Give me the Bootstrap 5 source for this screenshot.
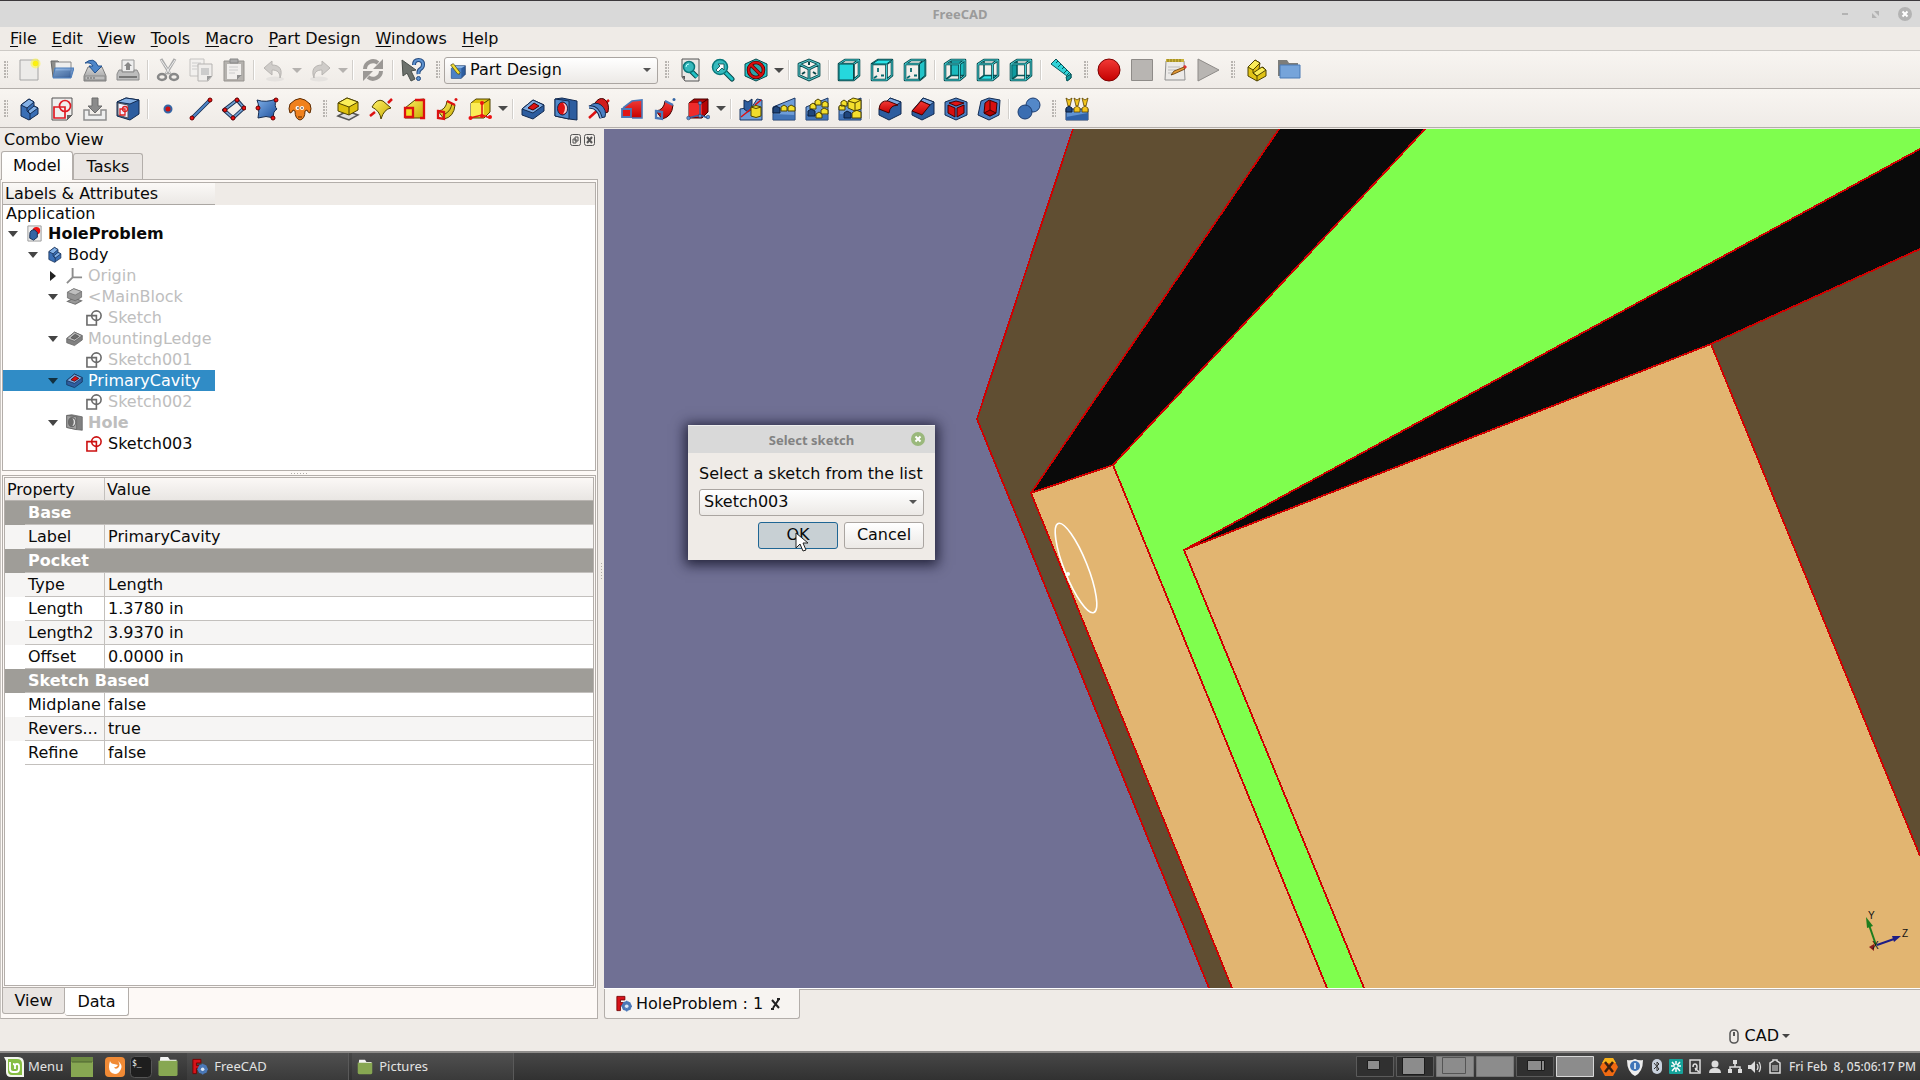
<!DOCTYPE html>
<html lang="en">
<head>
<meta charset="utf-8">
<meta name="viewport" content="width=device-width, initial-scale=1">
<title>FreeCAD</title>
<link href="https://cdn.jsdelivr.net/npm/bootstrap@5.3.0/dist/css/bootstrap.min.css" rel="stylesheet">
<style>
:root{--face:#efebe7;--line:#b3aeaa;--pane:#fdf9f6}
body{font-family:"DejaVu Sans",sans-serif;font-size:16px;line-height:20px;color:#0a0a0a;background:var(--face);overflow:hidden}
button{font:inherit;color:inherit}
svg{display:block;flex:none}
.titlebar{height:27px;background:#d9d9d9;border-top:1px solid #3b383c;font:bold 13px/26px "Noto Sans",sans-serif;color:#9b9b9b}
.titlebar .spacer,.wbtns{width:82px}
.wbtns button,.dlg-title button,.dockbtns button,.tabx{border:0;background:none;padding:0}
.menubar{height:24px;padding-left:3px;gap:1px;border-bottom:1px solid #cdcac6}
.menubar a{color:inherit;text-decoration:none;padding:0 7px;line-height:24px}
.menubar u{text-underline-offset:2px;text-decoration-thickness:1px}
.tools{background:linear-gradient(#f8f5f1,#efebe7);border-bottom:1px solid var(--line);padding-top:1px;height:38px}
.tools.second{height:39px;margin-bottom:1px}
.tb{width:33px;height:36px;border:0;padding:0;background:none;display:flex;align-items:center;justify-content:center}
.tb svg{width:24px;height:24px}
.dd{width:13px;height:36px;border:0;padding:0;background:none;display:flex;align-items:center;justify-content:center}
.dd::before{content:"";border:5px solid transparent;border-top:5px solid #4a4a4a;border-bottom:0}
.dd:disabled::before{border-top-color:#b5b2af}
.sepr{width:7px;display:flex;justify-content:flex-end;padding-right:2px}
.sepr::before{content:"";width:2px;height:20px;background:linear-gradient(90deg,#d2cfcb 1px,#fff 1px)}
.grip{width:15px;display:flex;justify-content:flex-end;padding-right:4px}
.grip.first{width:12px}
.grip::before{content:"";width:4px;height:18px;background:radial-gradient(circle at 1px 1px,#b9b5b1 0 1px,transparent 1px) 0 0/3px 3px}
.combo{border:1px solid #aaa5a1;border-radius:3px;color:#0a0a0a;font-size:16px;line-height:20px;height:27px;padding:0 24px 1px 4px;background:url("data:image/svg+xml,%3Csvg xmlns='http://www.w3.org/2000/svg' width='8' height='5'%3E%3Cpath d='M0 0h8L4 4z' fill='%23555'/%3E%3C/svg%3E") no-repeat right 6px center,linear-gradient(#fff,#ece9e6);background-size:8px 5px,auto;appearance:none}
.wb{width:214px}
.wb .combo{width:100%;padding-left:25px}
.wb svg{position:absolute;left:6px;top:6px;width:16px;height:16px}
.dock{width:598px}
.dock-title{height:22px;padding:0 3px 0 4px}
.dockbtns{gap:3px}
.tabs-top{height:28px;padding-left:1px}
.tabs-top button,.tabs-bot button{border:1px solid var(--line);background:#e9e5e2;padding:0}
.tabs-top button{border-bottom:0;border-radius:3px 3px 0 0;height:26px;width:70px}
.tabs-top button.on{background:linear-gradient(#fff,#fdfbf9);height:29px;width:72px;z-index:1;align-self:flex-start}
.pane{border:1px solid var(--line);border-left-color:#c9c5c1;background:var(--pane);padding:2px 1px 0 1px;min-height:0}
.tree{border:1px solid var(--line);background:#fff;height:289px}
.tree-head{background:var(--face);height:22px;line-height:22px}
.tree-head span{width:212px;height:22px;padding-left:2px;background:linear-gradient(#fbf9f7,#ebe8e5);border-bottom:1px solid #aba7a3}
.tree ul{list-style:none;margin:0;padding:0}
.tree li{height:21px;width:212px;display:flex;align-items:center}
.tree li.app{height:18px;padding-left:3px}
.tree li i{width:14px;display:flex;justify-content:center;margin-right:6px;flex:none}
.tree li i.o::before{content:"";border:5px solid transparent;border-top:6px solid #444;border-bottom:0}
.tree li i.c::before{content:"";border:5px solid transparent;border-left:6px solid #222;border-right:0}
.tree li svg{width:17px;height:17px;margin-right:5px}
.l1{padding-left:3px}.l2{padding-left:23px}.l3{padding-left:43px}.l4{padding-left:63px}
.off{color:#bebebe}
.off svg{filter:grayscale(1) opacity(.75)}
.tree li.sel{background:#308cc6;color:#fff}
.tree li.sel i.o::before{border-top-color:#12303f}
.split-h{height:4px;display:flex;justify-content:center;align-items:center}
.split-h::before{content:"";width:17px;height:1px;background:repeating-linear-gradient(90deg,#b0aca8 0 1px,transparent 1px 3px)}
.split-v{width:6px;display:flex;align-items:center;justify-content:center;padding-bottom:6px}
.split-v::before{content:"";width:1px;height:17px;background:repeating-linear-gradient(#b0aca8 0 1px,transparent 1px 3px)}
.props-out{border:1px solid var(--line);padding:1px;min-height:0}
.props-in{border:1px solid var(--line);background:#fff;height:100%}
.props{width:100%;table-layout:fixed;border-collapse:separate;border-spacing:0}
.props th,.props td{padding:0 0 0 3px;height:24px;line-height:21px;border-bottom:1px solid #c3c0bd;font-weight:400;white-space:nowrap;overflow:hidden;text-overflow:ellipsis}
.props thead th{height:23px;line-height:21px;padding-left:2px;background:linear-gradient(#fbf8f6,#e9e6e3);border-bottom:1px solid #b8b4b0}
.props tbody .ind{border-bottom:0;padding:0}
.props .k{border-right:1px solid #c3c0bd}
.props tr.alt>*{background:#f6f5f4}
.props tr.grp>*{background:#9f9d98;color:#fff;font-weight:700}
.tabs-bot{height:30px}
.tabs-bot button{border-top:0;width:63px;height:26px;border-radius:0 0 3px 3px}
.tabs-bot button.on{background:#fff;width:64px;height:28px;border-left:0}
.view3d{background:#707094;border-bottom:1px solid #fff;min-height:0}
.view3d>svg{width:100%;height:100%}
.dlg{left:84px;top:296px;width:247px;background:var(--face);box-shadow:0 2px 12px 3px rgba(10,10,30,.75)}
.dlg-title{height:28px;background:#d9d9d9;font:bold 13px/28px "Noto Sans",sans-serif;color:#828282;border-top:1px solid #eee}
.dlg-title button{position:absolute;right:10px;top:7px}
.dlg-body{padding:10px 11px 11px 11px}
.dlg-body label{line-height:22px;margin-bottom:4px;white-space:nowrap}
.qb{width:80px;height:27px;border:1px solid #aaa5a1;border-radius:3px;background:linear-gradient(#fff,#ece9e6);padding:0 0 1px}
.qb.ok{border-color:#1f6694;background:#c8d0d4}
.cursor{left:107px;top:107px}
.mdi{border-top:1px solid var(--line);height:30px}
.mdi-tab{width:196px;height:30px;margin-top:-1px;border:1px solid var(--line);border-top:0;border-radius:0 0 3px 3px;background:#f7f4f1;padding:0 15px 0 11px;gap:4px}
.status{height:32px;padding:2px 130px 0 0}
.status button{border:0;background:none;padding:0;gap:3px}
.status button svg{margin-right:3px}
.status button::after{content:"";border:4px solid transparent;border-top-color:#444;border-bottom:0}
.taskbar{height:29px;background:linear-gradient(#474747,#313131);border-top:2px solid #8e8c8a;font:13px/25px "Noto Sans",sans-serif;color:#e2e2e2}
.taskbar button{border:0;background:none;padding:0;height:27px}
.taskbar .task{width:162px;background:linear-gradient(#505050,#3a3a3a);border-right:1px solid #5a5a5a;padding-left:5px;gap:6px;margin-right:3px}
.tray svg{height:18px}
.clock{color:#dedede;font-size:12px;font-weight:500;white-space:pre}
</style>
</head>
<body class="d-flex flex-column vh-100">
<svg width="0" height="0" class="position-absolute" aria-hidden="true">
<defs>
<linearGradient id="gb" x1="0" y1="0" x2="1" y2="1"><stop offset="0" stop-color="#7fb0e8"/><stop offset="1" stop-color="#1d4f9c"/></linearGradient>
<linearGradient id="gg" x1="0" y1="0" x2="0" y2="1"><stop offset="0" stop-color="#d5d5d5"/><stop offset="1" stop-color="#9a9a9a"/></linearGradient>
<linearGradient id="gr" x1="0" y1="0" x2="0" y2="1"><stop offset="0" stop-color="#f23a36"/><stop offset="1" stop-color="#c40000"/></linearGradient>
<linearGradient id="gy" x1="0" y1="0" x2="1" y2="1"><stop offset="0" stop-color="#fff26a"/><stop offset="1" stop-color="#c9ab00"/></linearGradient>
<g id="wire"><path d="M2 6h14.500v16H2zM2 6l6-4h14v15.500L16.500 22M16.500 6L22 2" fill="none" stroke="#08474a" stroke-width="2.600" stroke-linejoin="round"/><path d="M2 6h14.500v16H2zM2 6l6-4h14v15.500L16.500 22M16.500 6L22 2" fill="none" stroke="#45cfd3" stroke-width="1"/></g>
<path id="tick" d="M8 10v4M11 17.500h3M4 20l3-2" stroke="#08696d" stroke-width="1.800" fill="none"/>
<path id="backw" d="M8 2v15.500h14M8 17.500L2 22" stroke="#08575a" stroke-width="1.600" fill="none"/>
<g id="base"><path d="M1 10L23 1v22H1z" fill="#6d9cd8" stroke="#1b3764"/><path d="M1 23L1 17l22 1v5z" fill="#2f62a8" opacity=".7"/></g>
</defs>
<symbol id="new" viewBox="0 0 24 24"><path d="M3 2h18v20H3z" fill="#ecebe9" stroke="#a5a5a5"/><circle cx="18.500" cy="5.500" r="5" fill="#fdf64a" opacity=".6"/><circle cx="18.500" cy="5.500" r="2.800" fill="#fbf010"/></symbol>
<symbol id="open" viewBox="0 0 24 24"><path d="M1 3h7l2 2h10v14H3z" fill="#8d8d8a" stroke="#666"/><path d="M5 4h16v9H5z" fill="#eee" stroke="#888"/><path d="M5 10h19l-3 10H3z" fill="url(#gb)" opacity=".75"/><path d="M5 10h19l-3 10H3z" fill="none" stroke="#4a7cba"/></symbol>
<symbol id="save" viewBox="0 0 24 24"><path d="M5 9h14l4 9v5H1v-5z" fill="url(#gg)" stroke="#7e7e7e"/><path d="M2 18h20v4H2z" fill="#bcbcbc" stroke="#8b8b8b"/><path d="M4 20h2m1 0h2m1 0h2" stroke="#666"/><path d="M2 5q9-7 13 3h4l-7 7-6-7h4Q8 4 2 5z" fill="#4d86c9" stroke="#24528e"/></symbol>
<symbol id="print" viewBox="0 0 24 24"><path d="M6 2h12v12H6z" fill="#eee" stroke="#999"/><path d="M12 4l4 4h-2v4h-4V8H8z" fill="#888"/><path d="M3 12h3v2h12v-2h3l2 4v6H1v-6z" fill="#bdbdbd" stroke="#8a8a8a"/><path d="M3 19h18" stroke="#777" stroke-width="2"/></symbol>
<symbol id="cut" viewBox="0 0 24 24"><path d="M5 1l9 15M19 1l-9 15" stroke="#aaa" stroke-width="3"/><path d="M5 2l9 13M19 2l-9 13" stroke="#eee"/><ellipse cx="6" cy="19" rx="4" ry="3" fill="none" stroke="#888" stroke-width="2.500"/><ellipse cx="18" cy="19" rx="4" ry="3" fill="none" stroke="#888" stroke-width="2.500"/></symbol>
<symbol id="copy" viewBox="0 0 24 24"><path d="M1 1h14v17H1z" fill="#f2f0ee" stroke="#c4c2c0"/><path d="M3 5h9M3 8h9M3 11h5" stroke="#ccc"/><path d="M9 6h14v12l-4 5H9z" fill="#efedeb" stroke="#b5b3b1"/><path d="M12 10h8v7h-8z" fill="#ccc"/><path d="M23 18h-5v5z" fill="#999"/></symbol>
<symbol id="paste" viewBox="0 0 24 24"><path d="M2 3h20v20H2z" fill="#b5b2ae" stroke="#96938f"/><path d="M5 6h14v12l-3 3H5z" fill="#f1efed"/><path d="M8 1h8v4H8z" fill="#aaa" stroke="#888"/><path d="M7 9h9M7 12h9M7 15h6" stroke="#ccc"/><path d="M20 17h-5v5z" fill="#8d8d8d"/></symbol>
<symbol id="undo" viewBox="0 0 24 24"><ellipse cx="13" cy="21" rx="9" ry="2.500" fill="#e5e2df"/><path d="M10 3v4c8 0 11 5 8 13 0-6-3-8-8-8v5L2 10z" fill="#cfccc9" stroke="#b8b5b2"/></symbol>
<symbol id="redo" viewBox="0 0 24 24"><ellipse cx="11" cy="21" rx="9" ry="2.500" fill="#e5e2df"/><path d="M14 3v4C6 7 3 12 6 20c0-6 3-8 8-8v5l8-7z" fill="#cfccc9" stroke="#b8b5b2"/></symbol>
<symbol id="reload" viewBox="0 0 24 24"><path d="M4 11a8 8 0 0 1 13-6M20 13a8 8 0 0 1-13 6" fill="none" stroke="#9b9895" stroke-width="4"/><path d="M22 1v10H12zM2 23V13h10z" fill="#9b9895"/></symbol>
<symbol id="what" viewBox="0 0 24 24"><path d="M1 2l1 16 4-3 4 8 4-2-4-8 5-1z" fill="#6c716c" stroke="#4a4f4a"/><path d="M13 7q0-5 4.500-5T22 6.500q0 3-2.500 4.500T17.500 16" fill="none" stroke="#244b80" stroke-width="4"/><path d="M13 7q0-5 4.500-5T22 6.500q0 3-2.500 4.500T17.500 16" fill="none" stroke="#5f93cf" stroke-width="2"/><circle cx="17.500" cy="20.500" r="2" fill="#5f93cf" stroke="#244b80"/></symbol>
<symbol id="pd" viewBox="0 0 24 24"><path d="M2 8l6-4h15v13l-6 6H2z" fill="#2d5d9f" stroke="#152f57"/><path d="M2 8h15v15H2z" fill="#4a80c5"/><path d="M2 8l6-4h15l-6 4z" fill="#86b1e4"/><path d="M1 3l4-2 10 13-1 3-3-1z" fill="#f1dc33" stroke="#453d00"/></symbol>
<symbol id="fit" viewBox="0 0 24 24"><path d="M4 1h17v22H7l-3-4z" fill="#e9e7e5" stroke="#555"/><path d="M13 13l6 6" stroke="#08474a" stroke-width="5"/><path d="M13 13l6 6" stroke="#21c0c4" stroke-width="3"/><circle cx="11" cy="9" r="5.500" fill="#35b9bd" stroke="#08777a" stroke-width="1.500"/><path d="M8 9q0-3 3-3" stroke="#bff" fill="none"/><path d="M4 18h3v4z" fill="#555"/></symbol>
<symbol id="fits" viewBox="0 0 24 24"><path d="M14 14l7 7" stroke="#08474a" stroke-width="5" stroke-linecap="round"/><path d="M14 14l7 7" stroke="#21c0c4" stroke-width="3" stroke-linecap="round"/><circle cx="9" cy="9" r="7.500" fill="#35b9bd" stroke="#08777a" stroke-width="1.500"/><path d="M5 12l4-4-2-2h6v6l-2-2-4 4z" fill="#fff" stroke="#08474a" stroke-width=".8"/></symbol>
<symbol id="style" viewBox="0 0 24 24"><path d="M12 1l11 5v12l-11 5L1 18V6z" fill="#23c5ca" stroke="#08474a"/><circle cx="12" cy="12" r="7.500" fill="#2aa5a9" stroke="#500" stroke-width="3.600"/><path d="M7 7l10 10" stroke="#500" stroke-width="3.600"/><circle cx="12" cy="12" r="7.500" fill="none" stroke="#d80f0f" stroke-width="2"/><path d="M6.500 6.500l11 11" stroke="#d80f0f" stroke-width="2"/></symbol>
<symbol id="iso" viewBox="0 0 24 24"><path d="M12 2l10 4v11.500L12 22 2 17.500V6zM2 6l10 5 10-5M12 11v11" fill="none" stroke="#08474a" stroke-width="2.800" stroke-linejoin="round"/><path d="M12 2l10 4v11.500L12 22 2 17.500V6zM2 6l10 5 10-5M12 11v11" fill="none" stroke="#56c7ca" stroke-width="1.100"/><path d="M5 16l3-2M19 16l-3-2M12 4v3" stroke="#08474a" stroke-width="2"/></symbol>
<symbol id="vf" viewBox="0 0 24 24"><use href="#wire"/><path d="M2 6h14.500v16H2z" fill="#25d8dd" stroke="#08474a"/></symbol>
<symbol id="vt" viewBox="0 0 24 24"><use href="#tick"/><use href="#wire"/><path d="M2 6l6-4h14l-5.500 4z" fill="#2be3e8" stroke="#08474a"/></symbol>
<symbol id="vr" viewBox="0 0 24 24"><use href="#tick"/><use href="#wire"/><path d="M16.500 6L22 2v15.500L16.500 22z" fill="#22c3c8" stroke="#08474a"/></symbol>
<symbol id="vre" viewBox="0 0 24 24"><path d="M8 2h14v15.500H8z" fill="#1bb9be"/><use href="#backw"/><use href="#wire"/></symbol>
<symbol id="vb" viewBox="0 0 24 24"><path d="M2 22l6-4.500h14L16.500 22z" fill="#2be3e8"/><use href="#backw"/><use href="#wire"/></symbol>
<symbol id="vl" viewBox="0 0 24 24"><path d="M2 6l6-4v15.500L2 22z" fill="#0d9a9f"/><use href="#backw"/><use href="#wire"/></symbol>
<symbol id="rule" viewBox="0 0 24 24"><path d="M2 6l5-5 15 15v4l-4 3v-5z" fill="#30d3d8" stroke="#08585c"/><path d="M17 19l5-3v4l-4 3z" fill="#159a9e" stroke="#08585c"/><path d="M9 3L7 5m5 1L9 9m6 0l-2 2m5 1l-3 3m5 0l-2 2" stroke="#08585c"/></symbol>
<symbol id="rec" viewBox="0 0 24 24"><circle cx="12" cy="12" r="11" fill="url(#gr)" stroke="#7d0000"/></symbol>
<symbol id="stop" viewBox="0 0 24 24"><path d="M1.500 1.500h21v21h-21z" fill="#b8b5b2" stroke="#8e8b88"/></symbol>
<symbol id="edit" viewBox="0 0 24 24"><path d="M3 3h18l1 19H2z" fill="#eceae8" stroke="#8f8f8f"/><path d="M3 1h18v3H3z" fill="#c9b23a"/><path d="M5 1v3m3-3v3m3-3v3m3-3v3m3-3v3" stroke="#8a7616"/><path d="M5 9h12M5 12h8M5 15h6" stroke="#bbb"/><path d="M8 17l3-4 10-4 1 2-11 5z" fill="#e49a35" stroke="#5e3500" stroke-width=".8"/><path d="M20 8l2-1 2 2-2 2z" fill="#d33"/></symbol>
<symbol id="play" viewBox="0 0 24 24"><path d="M2 1l21 11L2 23z" fill="#b8b5b2" stroke="#8e8b88"/></symbol>
<symbol id="part" viewBox="0 0 24 24"><path d="M4 9l7-7 5 3-1 6 4-2 3 3v6l-9 5-9-5z" fill="#e0c216" stroke="#4f4300"/><path d="M4 9l7-7 5 3-7 7zM9 15l9-6 4 3-9 6z" fill="#f9ec58" stroke="#4f4300"/><path d="M9 12v3l4 3v5" fill="none" stroke="#4f4300"/></symbol>
<symbol id="fold" viewBox="0 0 24 24"><path d="M1 2h9l2 3h9v13H1z" fill="#7d7d7a"/><path d="M3 7h20v13H3z" fill="#76a4da" stroke="#4b7bb5"/></symbol>
<symbol id="body" viewBox="0 0 24 24"><path d="M4 8l8-6 5 3v4l4 2v6l-9 6-8-4z" fill="#3a6fb5" stroke="#122a50"/><path d="M4 8l8-6 5 3-7 6zM11 14l6-5 4 2-8 6z" fill="#84b1e6" stroke="#122a50"/><path d="M10 11v3l3 3v6" fill="none" stroke="#122a50"/></symbol>
<symbol id="sketch" viewBox="0 0 24 24"><path d="M2 1h20v17l-5 5H2z" fill="#f0efee" stroke="#555"/><path d="M22 18h-5v5z" fill="#666"/><path d="M4 10h11v11H4z" fill="none" stroke="#e01b24" stroke-width="1.700"/><circle cx="15" cy="9" r="5.500" fill="none" stroke="#e01b24" stroke-width="1.700"/></symbol>
<symbol id="map" viewBox="0 0 24 24"><path d="M1 13h5v5h12v-5h5v10H1z" fill="#eee" stroke="#8f8f8f" stroke-width="1.500"/><path d="M9 1h6v8h4l-7 7-7-7h4z" fill="#8b8b8b" stroke="#6c6c6c"/></symbol>
<symbol id="mapf" viewBox="0 0 24 24"><path d="M1 5l9-4 13 2v14l-9 6-13-4z" fill="#2d5d9f" stroke="#122a50"/><path d="M1 5l9-4 13 2-9 4z" fill="#86b1e4" stroke="#122a50"/><path d="M2 6l10 2v13L2 18z" fill="#eef" stroke="#555"/><path d="M4 12h5v6H4z" fill="none" stroke="#d22" stroke-width="1.300"/><circle cx="9" cy="12" r="2.500" fill="none" stroke="#d22" stroke-width="1.300"/></symbol>
<symbol id="pt" viewBox="0 0 24 24"><circle cx="12" cy="12" r="3.500" fill="#c11" stroke="#3465a4" stroke-width="2"/></symbol>
<symbol id="ln" viewBox="0 0 24 24"><path d="M3 21L21 3" stroke="#122a50" stroke-width="3.600"/><path d="M3 21L21 3" stroke="#4f86c8" stroke-width="2"/><circle cx="3" cy="21" r="2" fill="#e11" stroke="#600"/><circle cx="21" cy="3" r="2" fill="#e11" stroke="#600"/></symbol>
<symbol id="dia" viewBox="0 0 24 24"><path d="M15 3l7 8-11 10-9-8z" fill="none" stroke="#122a50" stroke-width="3.600"/><path d="M15 3l7 8-11 10-9-8z" fill="none" stroke="#729fcf" stroke-width="1.800"/><g fill="#e11" stroke="#600"><circle cx="15" cy="3" r="2"/><circle cx="22" cy="11" r="2"/><circle cx="11" cy="21" r="2"/><circle cx="3" cy="13" r="2"/></g></symbol>
<symbol id="surf" viewBox="0 0 24 24"><path d="M2 3q9 3 19-1-2 8 1 10-5 3-3 9-8-3-16 0Q5 10 2 3z" fill="url(#gb)" stroke="#122a50"/><g fill="#e11" stroke="#600"><circle cx="21" cy="3" r="2"/><circle cx="3" cy="11" r="2"/><circle cx="18" cy="21" r="2"/></g></symbol>
<symbol id="goat" viewBox="0 0 24 24"><path d="M7 3q5-3 10 0l5 4q2 5 0 9-2 0-3-3l-2 1q0 8-5 9-5-1-5-9l-2-1q-1 3-3 3-2-4 0-9z" fill="#f0811d" stroke="#5d2a00"/><circle cx="9.500" cy="11" r="2" fill="#fff"/><circle cx="14" cy="11" r="2" fill="#fff"/><circle cx="10" cy="11" r=".8"/><circle cx="14" cy="11" r=".8"/><path d="M10 20h4" stroke="#5d2a00"/></symbol>
<symbol id="pad" viewBox="0 0 24 24"><path d="M2 19l9-5 11 4-9 5z" fill="#ddd" stroke="#555" stroke-width="1.500"/><path d="M2 6l9-5 11 4v8l-9 5-11-4z" fill="#dfc20f" stroke="#4f4300"/><path d="M2 6l9-5 11 4-9 5z" fill="#fbee59" stroke="#4f4300"/><path d="M13 10v8" stroke="#4f4300"/></symbol>
<symbol id="padg" viewBox="0 0 24 24"><path d="M2 19l9-5 11 4-9 5z" fill="#777" stroke="#444" stroke-width="1.500"/><path d="M2 6l9-5 11 4v8l-9 5-11-4z" fill="#707070" stroke="#333"/><path d="M2 6l9-5 11 4-9 5z" fill="#aaa" stroke="#444"/></symbol>
<symbol id="rev" viewBox="0 0 24 24"><path d="M1 19l5-4M19 6l4-4" stroke="#d11" stroke-width="2.500"/><path d="M3 10Q8 1 14 4l8 7q-7 1-10 11-1-8-9-12z" fill="url(#gy)" stroke="#4f4300"/></symbol>
<symbol id="loft" viewBox="0 0 24 24"><path d="M3 11L13 3l9-1v19H3z" fill="url(#gy)" stroke="#4f4300"/><path d="M13 3h9v18h-4" fill="none" stroke="#d11" stroke-width="2.300"/><path d="M3 11h8v9H3z" fill="#f3dc22" stroke="#d11" stroke-width="2.300"/></symbol>
<symbol id="sweep" viewBox="0 0 24 24"><path d="M3 14q8-1 9-10l8 4q-1 12-11 14z" fill="url(#gy)" stroke="#4f4300"/><path d="M10 17q6-3 7-11" fill="none" stroke="#4f4300"/><path d="M3 14l6 1v7l-6-1zM12 4l8 4" fill="none" stroke="#d11" stroke-width="2.300"/><circle cx="21" cy="2.500" r="1.500" fill="#d11"/></symbol>
<symbol id="prim" viewBox="0 0 24 24"><path d="M3 6l5-4h14v13l-6 6H3z" fill="#e0c512" stroke="#4f4300"/><path d="M3 6h13v14H3z" fill="#fbec55"/><path d="M16 6l6-4" stroke="#4f4300"/><path d="M14 6v13M2 21l12-3 8 3" fill="none" stroke="#d11" stroke-width="1.500"/><g fill="#e11"><circle cx="14" cy="6" r="2"/><circle cx="2.500" cy="21" r="2"/><circle cx="14" cy="19" r="2"/><circle cx="22" cy="20" r="2"/></g></symbol>
<symbol id="pocket" viewBox="0 0 24 24"><path d="M1 12L12 3l11 5v6L12 22 1 18z" fill="#2d5d9f" stroke="#122a50"/><path d="M1 12L12 3l11 5-11 8z" fill="#7eaae0" stroke="#122a50"/><path d="M7 11l6-5 5 3-6 4z" fill="#d11" stroke="#400"/></symbol>
<symbol id="hole" viewBox="0 0 24 24"><path d="M1 2l7-1 15 3v19l-8-1-14-3z" fill="#2d5d9f" stroke="#122a50"/><path d="M1 2l14 2v18L1 19z" fill="#5289ca" stroke="#122a50"/><ellipse cx="8.500" cy="11.500" rx="5" ry="6.500" fill="#d11" stroke="#122a50"/><path d="M9 6q4 5 0 11 4-1 4-5.500T9 6z" fill="#fff" opacity=".8"/></symbol>
<symbol id="groove" viewBox="0 0 24 24"><path d="M2 21L22 3" stroke="#d11" stroke-width="2.500"/><path d="M8 6q4-6 9-4 6 4 4 13l-5 2q-2-9-8-11z" fill="#d11c1c" stroke="#400"/><path d="M3 9q5-5 11-1 6 5 4 12l-5 1q-1-9-10-12z" fill="#4a80c4" stroke="#122a50"/><path d="M2 10q9-1 12 11" fill="none" stroke="#122a50" stroke-width="3.500"/><path d="M2 10q9-1 12 11" fill="none" stroke="#78a6df" stroke-width="1.500"/></symbol>
<symbol id="sloft" viewBox="0 0 24 24"><path d="M3 11L12 4l10-1v18H3z" fill="url(#gr)"/><path d="M3 11L12 4l10-1v18l-10 0" fill="none" stroke="#4a78b8" stroke-width="1.600"/><path d="M2 12h9v8H2z" fill="#e01515" stroke="#4a78b8" stroke-width="1.800"/></symbol>
<symbol id="ssweep" viewBox="0 0 24 24"><path d="M3 14q8-1 9-10l8 4q-1 12-11 14z" fill="url(#gr)" stroke="#400"/><path d="M3 14l6 1v7l-6-1zM12 4l8 4" fill="none" stroke="#4a78b8" stroke-width="2.300"/><circle cx="21" cy="2.500" r="1.500" fill="#3465a4"/></symbol>
<symbol id="sprim" viewBox="0 0 24 24"><path d="M3 6l5-4h14v13l-6 6H3z" fill="#b50505" stroke="#400"/><path d="M3 6h13v14H3z" fill="#ef2b2b"/><path d="M16 6l6-4" stroke="#400"/><path d="M14 6v13M2 21l12-3 8 3" fill="none" stroke="#3465a4" stroke-width="1.500"/><g fill="#5f93d3" stroke="#122a50" stroke-width=".5"><circle cx="14" cy="6" r="1.800"/><circle cx="2.500" cy="21" r="1.800"/><circle cx="14" cy="19" r="1.800"/><circle cx="22" cy="20" r="1.800"/></g></symbol>
<symbol id="mir" viewBox="0 0 24 24"><path d="M1 12l12-2 5-8 5 1v20H1z" fill="#6d9cd8" stroke="#1b3764"/><path d="M5 3l4 2 4-3v10l-4 3-4-3z" fill="#2d5d9f" stroke="#122a50"/><path d="M2 20l10-8M16 8l6-5" stroke="#d11" stroke-width="1.500"/><path d="M12 10q5-3 10 0v9q-5 3-10 0z" fill="#f0dc2c" stroke="#4f4300"/><path d="M12 10q5 3 10 0" fill="none" stroke="#4f4300"/></symbol>
<symbol id="lin" viewBox="0 0 24 24"><use href="#base"/><path d="M1 11l3-2 4 2v5H1z" fill="#1f467d" stroke="#0b1d3a"/><g fill="#f3df2d" stroke="#4f4300"><path d="M9 10l3-2 3 2v4H9zM16 10l3-2 4 2v4h-7z"/></g></symbol>
<symbol id="pol" viewBox="0 0 24 24"><use href="#base"/><g fill="#f3df2d" stroke="#4f4300"><path d="M5 8l3-2 3 2v4H5zM10 4l3-2 3 2v4h-6zM17 6l3-2 3 2v4h-6zM16 13l3-2 4 2v4h-7zM11 17l3-2 3 2v4h-6z"/></g><path d="M3 14l3-2 4 2v5H3z" fill="#1f467d" stroke="#0b1d3a"/></symbol>
<symbol id="mul" viewBox="0 0 24 24"><use href="#base"/><g fill="#f3df2d" stroke="#4f4300"><path d="M3 5l3-2 3 2v4H3zM10 4l5-3 8 2v9l-6 2-7-3zM1 9l3-1 3 1v4H1zM14 16l4-3 5 2v6h-9z"/></g><path d="M10 4l7 2 6-3M17 6v8" fill="none" stroke="#4f4300"/><path d="M6 16l3-2 4 2v5H6z" fill="#1f467d" stroke="#0b1d3a"/></symbol>
<symbol id="fil" viewBox="0 0 24 24"><path d="M1 12L12 1l11 4v12l-12 6-10-5z" fill="#2d5d9f" stroke="#122a50"/><path d="M12 1l11 4-6 4-9-4z" fill="#7eaae0" stroke="#122a50"/><path d="M1 12q1-9 9-8l10 4q-8 0-9 8z" fill="url(#gr)" stroke="#400"/></symbol>
<symbol id="cha" viewBox="0 0 24 24"><path d="M1 14L12 1l11 4v12l-12 6-10-5z" fill="#2d5d9f" stroke="#122a50"/><path d="M12 1l11 4-4 3-9-4z" fill="#7eaae0" stroke="#122a50"/><path d="M1 14L10 4l9 4-8 10z" fill="url(#gr)" stroke="#400"/></symbol>
<symbol id="dra" viewBox="0 0 24 24"><path d="M1 5l11-4 11 4v13l-11 5-11-5z" fill="#4a7fc3" stroke="#122a50"/><path d="M5 6l7-2 8 2-8 3z" fill="#e01515" stroke="#400"/><path d="M4 8l7 3v9l-7-4zM20 8l-7 3v9l7-4z" fill="#d80f0f" stroke="#400"/></symbol>
<symbol id="thi" viewBox="0 0 24 24"><path d="M4 4l8-3 11 2-1 15-10 5L1 18z" fill="#4a7fc3" stroke="#122a50"/><path d="M8 6l4-3 8 3-1 10-6 3-6-3z" fill="#d80f0f" stroke="#400"/><path d="M13 4v9l-6 3 6 3 6-3-6-3" fill="#b50000" stroke="#400"/></symbol>
<symbol id="boo" viewBox="0 0 24 24"><circle cx="16" cy="8" r="7" fill="#5388c9" stroke="#1b3c70"/><circle cx="8" cy="15" r="7" fill="#3b6eb2" stroke="#1b3c70"/></symbol>
<symbol id="gear" viewBox="0 0 24 24"><path d="M1 12h22v11H1z" fill="#5f93d3" stroke="#1b3764"/><path d="M1 23v-3l22-4v7z" fill="#2f62a8"/><g fill="#f3c51c" stroke="#5a4300" stroke-width=".8"><path d="M1 1l3 2 3-2-2 8H3zM9 1l3 2 3-2-2 8h-2zM17 1l3 2 3-2-2 8h-2z"/><path d="M9 11l3-2 3 2v4H9zM17 11l3-2 3 2v4h-6z"/></g><path d="M1 11l3-2 3 2v4H1z" fill="#1f467d" stroke="#0b1d3a"/></symbol>
<symbol id="doc" viewBox="0 0 18 18"><path d="M2 1h14v16H2z" fill="#eee" stroke="#999"/><circle cx="11" cy="6" r="4" fill="#e11"/><path d="M4 10q0-5 5-5l3 3v5l-4 3-4-2z" fill="#3465a4" stroke="#122a50"/></symbol>
<symbol id="org" viewBox="0 0 18 18"><path d="M7 1v10h10M7 11l-6 6" fill="none" stroke="#666" stroke-width="2"/></symbol>
<symbol id="sk" viewBox="0 0 18 18"><path d="M1 7h10v10H1z" fill="none" stroke="#c11" stroke-width="1.700"/><circle cx="11" cy="7" r="5" fill="none" stroke="#c11" stroke-width="1.700"/></symbol>
<symbol id="fc" viewBox="0 0 18 18"><path d="M1 1h9v4H5v3h4v3H5v6H1z" fill="#d8131a" stroke="#700"/><circle cx="12" cy="12" r="4" fill="none" stroke="#4a78b8" stroke-width="3"/><path d="M12 6v12M6 12h12M8 8l8 8M16 8l-8 8" stroke="#4a78b8" stroke-width="1.600"/><circle cx="12" cy="12" r="2" fill="#dbe6f5"/></symbol>
<symbol id="gfold" viewBox="0 0 22 22"><path d="M3 1h8l2 3h7v4H2z" fill="#f4f4f4"/><path d="M1 5h20v14q0 2-2 2H3q-2 0-2-2z" fill="#87a752"/></symbol>
</svg>

<header>
<div class="titlebar d-flex">
<span class="spacer"></span><span class="flex-grow-1 text-center">FreeCAD</span>
<div class="wbtns d-flex justify-content-end align-items-center gap-3 pe-2">
<button aria-label="Minimize"><svg width="14" height="14"><path d="M4 6h6v2H4z" fill="#b3b3b3"/></svg></button>
<button aria-label="Restore"><svg width="14" height="14"><path d="M6 4h5v5zM4 6l5 5H4z" fill="#b3b3b3"/></svg></button>
<button aria-label="Close"><svg width="14" height="14"><circle cx="7" cy="7" r="7" fill="#b3b3b3"/><path d="M4.500 4.500l5 5m0-5l-5 5" stroke="#fff" stroke-width="2"/></svg></button>
</div></div>
<nav class="menubar d-flex"><a href="#"><u>F</u>ile</a><a href="#"><u>E</u>dit</a><a href="#"><u>V</u>iew</a><a href="#"><u>T</u>ools</a><a href="#"><u>M</u>acro</a><a href="#"><u>P</u>art Design</a><a href="#"><u>W</u>indows</a><a href="#"><u>H</u>elp</a></nav>
<div class="tools d-flex align-items-center" role="toolbar" aria-label="File and view">
<span class="grip first"></span>
<button class="tb" aria-label="New"><svg><use href="#new"/></svg></button><button class="tb" aria-label="Open"><svg><use href="#open"/></svg></button><button class="tb" aria-label="Save"><svg><use href="#save"/></svg></button><button class="tb" aria-label="Print"><svg><use href="#print"/></svg></button><span class="sepr"></span>
<button class="tb" aria-label="Cut"><svg><use href="#cut"/></svg></button><button class="tb" aria-label="Copy"><svg><use href="#copy"/></svg></button><button class="tb" aria-label="Paste"><svg><use href="#paste"/></svg></button><span class="sepr"></span>
<button class="tb" disabled aria-label="Undo"><svg><use href="#undo"/></svg></button><button class="dd" disabled aria-label="Undo list"></button><button class="tb" disabled aria-label="Redo"><svg><use href="#redo"/></svg></button><button class="dd" disabled aria-label="Redo list"></button><span class="sepr"></span>
<button class="tb" aria-label="Refresh"><svg><use href="#reload"/></svg></button><span class="sepr"></span><button class="tb" aria-label="What's this"><svg><use href="#what"/></svg></button><span class="grip"></span>
<div class="wb position-relative"><select class="combo" aria-label="Workbench"><option>Part Design</option></select><svg><use href="#pd"/></svg></div><span class="grip"></span>
<button class="tb" aria-label="Fit all"><svg><use href="#fit"/></svg></button><button class="tb" aria-label="Fit selection"><svg><use href="#fits"/></svg></button><button class="tb" aria-label="Draw style"><svg><use href="#style"/></svg></button><button class="dd" aria-label="Draw style list"></button><span class="sepr"></span>
<button class="tb" aria-label="Isometric"><svg><use href="#iso"/></svg></button><span class="sepr"></span>
<button class="tb" aria-label="Front"><svg><use href="#vf"/></svg></button><button class="tb" aria-label="Top"><svg><use href="#vt"/></svg></button><button class="tb" aria-label="Right"><svg><use href="#vr"/></svg></button><span class="sepr"></span>
<button class="tb" aria-label="Rear"><svg><use href="#vre"/></svg></button><button class="tb" aria-label="Bottom"><svg><use href="#vb"/></svg></button><button class="tb" aria-label="Left"><svg><use href="#vl"/></svg></button><span class="sepr"></span>
<button class="tb" aria-label="Measure"><svg><use href="#rule"/></svg></button><span class="grip"></span>
<button class="tb" aria-label="Record macro"><svg><use href="#rec"/></svg></button><button class="tb" aria-label="Stop macro"><svg><use href="#stop"/></svg></button><button class="tb" aria-label="Edit macros"><svg><use href="#edit"/></svg></button><button class="tb" aria-label="Run macro"><svg><use href="#play"/></svg></button><span class="grip"></span>
<button class="tb" aria-label="Create part"><svg><use href="#part"/></svg></button><button class="tb" aria-label="Create group"><svg><use href="#fold"/></svg></button>
</div>
<div class="tools second d-flex align-items-center" role="toolbar" aria-label="Part design">
<span class="grip first"></span>
<button class="tb" aria-label="Body"><svg><use href="#body"/></svg></button><button class="tb" aria-label="Create sketch"><svg><use href="#sketch"/></svg></button><button class="tb" aria-label="Edit sketch"><svg><use href="#map"/></svg></button><button class="tb" aria-label="Map sketch"><svg><use href="#mapf"/></svg></button><span class="sepr"></span>
<button class="tb" aria-label="Datum point"><svg><use href="#pt"/></svg></button><button class="tb" aria-label="Datum line"><svg><use href="#ln"/></svg></button><button class="tb" aria-label="Datum plane"><svg><use href="#dia"/></svg></button><button class="tb" aria-label="Shape binder"><svg><use href="#surf"/></svg></button><button class="tb" aria-label="Clone"><svg><use href="#goat"/></svg></button><span class="grip"></span>
<button class="tb" aria-label="Pad"><svg><use href="#pad"/></svg></button><button class="tb" aria-label="Revolution"><svg><use href="#rev"/></svg></button><button class="tb" aria-label="Additive loft"><svg><use href="#loft"/></svg></button><button class="tb" aria-label="Additive pipe"><svg><use href="#sweep"/></svg></button><button class="tb" aria-label="Additive primitive"><svg><use href="#prim"/></svg></button><button class="dd" aria-label="Additive primitives"></button><span class="sepr"></span>
<button class="tb" aria-label="Pocket"><svg><use href="#pocket"/></svg></button><button class="tb" aria-label="Hole"><svg><use href="#hole"/></svg></button><button class="tb" aria-label="Groove"><svg><use href="#groove"/></svg></button><button class="tb" aria-label="Subtractive loft"><svg><use href="#sloft"/></svg></button><button class="tb" aria-label="Subtractive pipe"><svg><use href="#ssweep"/></svg></button><button class="tb" aria-label="Subtractive primitive"><svg><use href="#sprim"/></svg></button><button class="dd" aria-label="Subtractive primitives"></button><span class="sepr"></span>
<button class="tb" aria-label="Mirrored"><svg><use href="#mir"/></svg></button><button class="tb" aria-label="Linear pattern"><svg><use href="#lin"/></svg></button><button class="tb" aria-label="Polar pattern"><svg><use href="#pol"/></svg></button><button class="tb" aria-label="Multi transform"><svg><use href="#mul"/></svg></button><span class="sepr"></span>
<button class="tb" aria-label="Fillet"><svg><use href="#fil"/></svg></button><button class="tb" aria-label="Chamfer"><svg><use href="#cha"/></svg></button><button class="tb" aria-label="Draft"><svg><use href="#dra"/></svg></button><button class="tb" aria-label="Thickness"><svg><use href="#thi"/></svg></button><span class="sepr"></span>
<button class="tb" aria-label="Boolean"><svg><use href="#boo"/></svg></button><span class="grip"></span>
<button class="tb" aria-label="Gear"><svg><use href="#gear"/></svg></button>
</div>
</header>

<main class="d-flex flex-grow-1" style="min-height:0">
<aside class="dock d-flex flex-column flex-shrink-0">
<div class="dock-title d-flex align-items-center justify-content-between"><span>Combo View</span>
<span class="dockbtns d-flex"><button aria-label="Float"><svg width="11" height="12" fill="none" stroke="#555"><rect x=".5" y=".5" width="10" height="11" rx="2"/><path d="M5 3h3v4H5zM3 5h3v4H3z"/></svg></button><button aria-label="Close panel"><svg width="11" height="12" fill="none" stroke="#555"><rect x=".5" y=".5" width="10" height="11" rx="2"/><path d="M3 3l5 6m0-6L3 9" stroke-width="2"/></svg></button></span></div>
<div class="tabs-top d-flex align-items-end"><button class="on position-relative">Model</button><button>Tasks</button></div>
<section class="pane flex-grow-1 d-flex flex-column">
<div class="tree flex-shrink-0">
<div class="tree-head"><span class="d-block">Labels &amp; Attributes</span></div>
<ul>
<li class="app">Application</li>
<li class="l1"><i class="o"></i><svg><use href="#doc"/></svg><b>HoleProblem</b></li>
<li class="l2"><i class="o"></i><svg><use href="#body"/></svg>Body</li>
<li class="l3 off"><i class="c"></i><svg><use href="#org"/></svg>Origin</li>
<li class="l3 off"><i class="o"></i><svg><use href="#padg"/></svg>&lt;MainBlock</li>
<li class="l4 off"><i></i><svg><use href="#sk"/></svg>Sketch</li>
<li class="l3 off"><i class="o"></i><svg><use href="#pocket"/></svg>MountingLedge</li>
<li class="l4 off"><i></i><svg><use href="#sk"/></svg>Sketch001</li>
<li class="l3 sel"><i class="o"></i><svg><use href="#pocket"/></svg>PrimaryCavity</li>
<li class="l4 off"><i></i><svg><use href="#sk"/></svg>Sketch002</li>
<li class="l3 off"><i class="o"></i><svg><use href="#hole"/></svg><b>Hole</b></li>
<li class="l4"><i></i><svg><use href="#sk"/></svg>Sketch003</li>
</ul></div>
<div class="split-h"></div>
<div class="props-out flex-grow-1"><div class="props-in">
<table class="props"><colgroup><col style="width:20px"><col style="width:80px"><col></colgroup>
<thead><tr><th class="k" colspan="2">Property</th><th>Value</th></tr></thead>
<tbody>
<tr class="grp"><td class="ind"></td><th colspan="2">Base</th></tr>
<tr class="alt"><td class="ind"></td><th class="k">Label</th><td>PrimaryCavity</td></tr>
<tr class="grp"><td class="ind"></td><th colspan="2">Pocket</th></tr>
<tr class="alt"><td class="ind"></td><th class="k">Type</th><td>Length</td></tr>
<tr><td class="ind"></td><th class="k">Length</th><td>1.3780 in</td></tr>
<tr class="alt"><td class="ind"></td><th class="k">Length2</th><td>3.9370 in</td></tr>
<tr><td class="ind"></td><th class="k">Offset</th><td>0.0000 in</td></tr>
<tr class="grp"><td class="ind"></td><th colspan="2">Sketch Based</th></tr>
<tr><td class="ind"></td><th class="k">Midplane</th><td>false</td></tr>
<tr class="alt"><td class="ind"></td><th class="k">Revers...</th><td>true</td></tr>
<tr><td class="ind"></td><th class="k">Refine</th><td>false</td></tr>
</tbody></table></div></div>
<div class="tabs-bot d-flex align-items-start flex-shrink-0"><button>View</button><button class="on">Data</button></div>
</section>
</aside>
<div class="split-v flex-shrink-0"></div>
<section class="d-flex flex-column flex-grow-1" style="min-width:0">
<div class="view3d flex-grow-1 position-relative">
<svg viewBox="604 129 1316 859" preserveAspectRatio="xMinYMin slice" shape-rendering="crispEdges" role="img" aria-label="3D view">
<path d="M1073 129L977 419L1209 988H1920V129z" fill="#604e32"/>
<path d="M1279 129L1031 493L1113 465L1184 550L1711 344L1920 249V129z" fill="#0a0a0a"/>
<path d="M1425 129L1113 465L1327 988H1364L1184 550L1920 149V129z" fill="#7ffe4e"/>
<path d="M1031 493L1113 465L1327 988H1232zM1184 550L1711 344L1920 856V988H1364z" fill="#e2b571"/>
<path d="M1073 129L977 419L1209 988M1279 129L1031 493L1232 988M1425 129L1113 465L1327 988M1031 493L1113 465M1920 149L1184 550L1364 988M1184 550L1711 344L1920 249M1711 344L1920 856" fill="none" stroke="#d00000" stroke-width="1.800"/>
<g shape-rendering="auto"><ellipse cx="1076" cy="568" rx="48" ry="11.500" transform="rotate(68.200 1076 568)" fill="none" stroke="#fff" stroke-width="1.600"/><circle cx="1068" cy="574" r="2" fill="#fff"/>
<path d="M1876 945L1868 922" stroke="#1d7d1d" stroke-width="2"/><path d="M1866 917l7 9-6 2z" fill="#1d7d1d"/>
<path d="M1877 945l17-6" stroke="#1d1d85" stroke-width="2"/><path d="M1901 936l-9 0 2 6z" fill="#1d1d85"/><path d="M1869 947l5-3v7z" fill="#8a1d1d"/></g>
<g font-family="Liberation Sans, sans-serif" font-size="10" fill="#111"><text x="1868" y="919">Y</text><text x="1902" y="937">Z</text><text x="1872" y="949">X</text></g>
</svg>
<div class="dlg position-absolute" role="dialog" aria-label="Select sketch">
<div class="dlg-title text-center">Select sketch<button aria-label="Close dialog"><svg width="14" height="14"><circle cx="7" cy="7" r="7" fill="#9ab87c"/><path d="M4.500 4.500l5 5m0-5l-5 5" stroke="#fff" stroke-width="2"/></svg></button></div>
<div class="dlg-body"><label for="sketchSel" class="d-block">Select a sketch from the list</label>
<select id="sketchSel" class="combo w-100 d-block"><option>Sketch003</option></select>
<div class="d-flex justify-content-end" style="gap:6px;padding-top:6px"><button class="qb ok">OK</button><button class="qb">Cancel</button></div></div>
<svg class="cursor position-absolute" width="14" height="20"><path d="M1 1v15l4-4 3 7 3-1-3-7h5z" fill="#fff" stroke="#222"/></svg>
</div></div>
<div class="mdi"><div class="mdi-tab d-flex align-items-center"><svg width="16" height="17"><use href="#fc"/></svg><span class="text-nowrap">HoleProblem : 1</span><button class="tabx ms-1" aria-label="Close tab"><svg width="10" height="12"><path d="M1 2l7 8M8 1L2 10M6 1h3M0 11h3" stroke="#222" stroke-width="2"/></svg></button></div></div>
</section>
</main>
<div class="status d-flex justify-content-end align-items-center"><button class="d-flex align-items-center"><svg width="10" height="15"><rect x="1" y="1" width="8" height="13" rx="3.500" fill="none" stroke="#555" stroke-width="1.500"/><path d="M4 3h2v4H4z" fill="#555"/></svg>CAD</button></div>
<footer class="taskbar d-flex align-items-center">
<button class="d-flex align-items-center ps-1"><svg width="20" height="20"><path d="M0 0h14q6 0 6 6v14H7q-5 0-5-5V4z" fill="#f3f6ee"/><path d="M4 2h9q5 0 5 5v11H8q-4 0-4-4z" fill="#86be43"/><path d="M6 5v7q0 3 3 3h3q3 0 3-3V9q0-2-2-2t-2 2v3m0-3q0-2-2-2" fill="none" stroke="#fff" stroke-width="1.800"/></svg><span class="ms-1">Menu</span></button>
<button aria-label="Show desktop" class="ms-2"><svg width="22" height="20"><path d="M0 0h22v20H0z" fill="#87a752"/><path d="M0 0h22v5H0z" fill="#6d8a42"/><path d="M1 5h20" stroke="#4f6530"/></svg></button>
<button aria-label="Firefox" style="margin-left:12px"><svg width="20" height="20"><rect width="20" height="20" rx="4" fill="#f08a35"/><path d="M5 4q1 3 4 3l4 1q-2 3-4 2 1 3 4 1 3-3 0-7 5 4 3 8-2 5-6 5-6-1-6-7 0-3 1-6z" fill="#fff"/></svg></button>
<button aria-label="Terminal" style="margin-left:5px"><svg width="22" height="22"><rect x=".5" y=".5" width="21" height="21" rx="4" fill="#1e1e1e" stroke="#555"/><text x="2" y="10" font-family="DejaVu Sans Mono, monospace" font-size="8" fill="#fff">$_</text></svg></button>
<button aria-label="Files" class="me-2" style="margin-left:5px"><svg width="22" height="21"><use href="#gfold"/></svg></button>
<button class="task d-flex align-items-center"><svg width="16" height="17"><use href="#fc"/></svg>FreeCAD</button>
<button class="task d-flex align-items-center"><svg width="16" height="16"><use href="#gfold"/></svg>Pictures</button>
<div class="ms-auto d-flex align-items-center tray">
<svg width="239" height="21" style="height:21px"><g fill="#303030" stroke="#5b5b5b"><path d="M.5.500h37v20H.5zM40.500.500h37v20h-37zM160.500.500h37v20h-37z"/></g><g fill="#8c8c8c" stroke="#777"><path d="M80.500.500h37v20h-37zM120.500.500h37v20h-37z"/><path d="M200.500.500h37v20h-37z" stroke="#d8d8d8"/></g><g fill="#8c8c8c" stroke="#1c1c1c"><path d="M11.500 4.500h12v9h-12zM46.500 1.500h22v17h-22zM171.500 4.500h17v10h-17zM185.500 4.500v10"/></g><path d="M86.500 1.500h23v16h-23z" fill="none" stroke="#555"/></svg>
<svg width="18" height="18" style="margin-left:5px"><path d="M5 0h8l5 9-5 9H5L0 9z" fill="#f06a12"/><path d="M5 0h8l3 5H2z" fill="#f7b21a"/><path d="M5 4l8 10M13 4L5 14" stroke="#3a2010" stroke-width="2.500"/></svg>
<svg width="16" height="18" style="margin-left:9px"><path d="M8 1q4 2 8 1 0 12-8 16Q0 14 0 2q4 1 8-1z" fill="#eee"/><circle cx="8" cy="8" r="5" fill="#3f75b8"/><path d="M8 5v6" stroke="#cde" stroke-width="2"/></svg>
<svg width="10" height="18" style="margin-left:9px"><rect y="1" width="10" height="15" rx="5" fill="#c9d2de"/><path d="M2 5l5 6-2 2V4l2 2-5 5" fill="none" stroke="#333"/></svg>
<svg width="14" height="18" style="margin-left:7px"><rect y="1" width="14" height="15" rx="1" fill="#16a29a"/><path d="M7 3v11M2 8h10M3 4l8 9M11 4l-8 9" stroke="#fff" stroke-width="1.500"/><circle cx="7" cy="8" r="1.500" fill="#16a29a"/></svg>
<svg width="12" height="18" style="margin-left:6px"><rect x="1" y="2" width="10" height="13" fill="none" stroke="#ddd" stroke-width="1.500"/><path d="M4 9q0-3 2-3t2 3-2 3M6 10l4 4" fill="none" stroke="#ddd" stroke-width="1.500"/></svg>
<svg width="12" height="18" style="margin-left:8px" fill="#dcdcdc"><circle cx="6" cy="6" r="3.500"/><path d="M0 15q0-5 6-5t6 5z"/></svg>
<svg width="14" height="18" style="margin-left:7px"><path d="M5 2h4v4H5zM0 11h4v4H0zM10 11h4v4h-4z" fill="#dcdcdc"/><path d="M7 6v3M2 11V9h10v2" fill="none" stroke="#dcdcdc" stroke-width="1.500"/></svg>
<svg width="14" height="18" style="margin-left:6px"><path d="M0 7h3l4-4v12l-4-4H0z" fill="#dcdcdc"/><path d="M9 6q2 3 0 6M11 4q3 5 0 10" fill="none" stroke="#dcdcdc" stroke-width="1.300"/></svg>
<svg width="12" height="18" style="margin-left:7px"><path d="M4 2h4v1l3 2v10H1V5l3-2z" fill="none" stroke="#dcdcdc" stroke-width="1.500"/><path d="M3 8h6M3 10h6M3 12h6" stroke="#dcdcdc"/></svg>
<span class="clock ms-2 me-1">Fri Feb  8, 05:06:17 PM</span>
</div>
</footer>
<script src="https://cdn.jsdelivr.net/npm/bootstrap@5.3.0/dist/js/bootstrap.bundle.min.js"></script>
</body>
</html>
